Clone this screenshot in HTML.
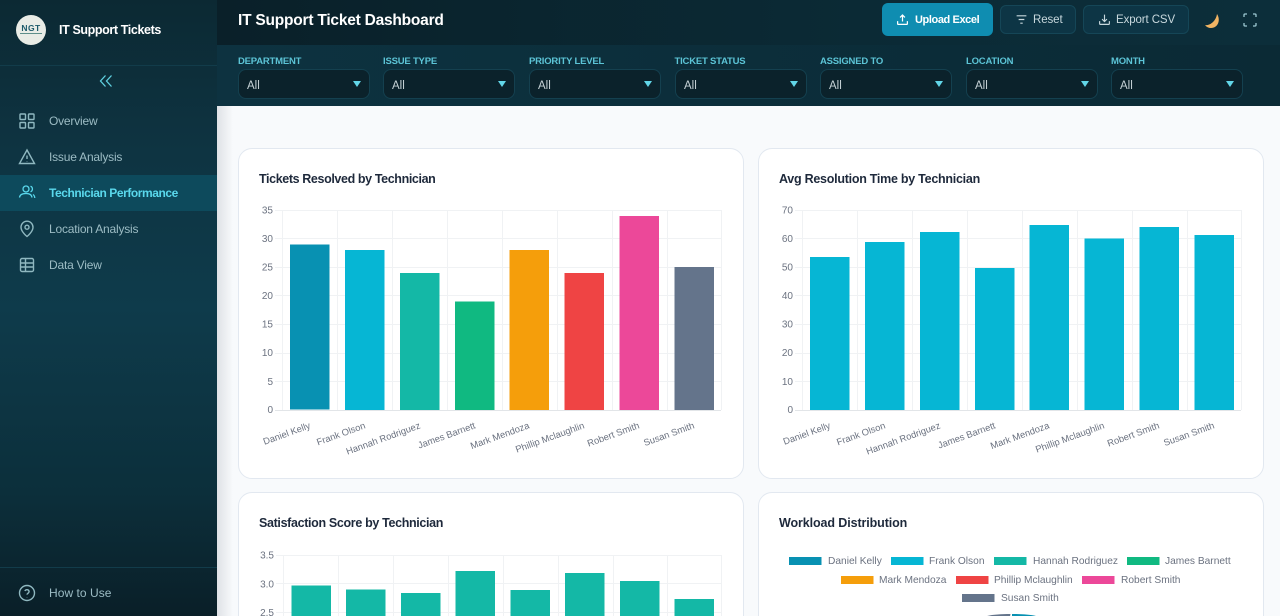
<!DOCTYPE html>
<html><head><meta charset="utf-8"><title>IT Support Ticket Dashboard</title>
<style>
*{box-sizing:border-box;margin:0;padding:0}
html,body{width:1280px;height:616px;overflow:hidden;background:#f8fafc;font-family:"Liberation Sans",sans-serif}
#root{position:relative;width:1280px;height:616px;overflow:hidden;background:#f8fafc}
.abs{position:absolute}
#side{left:0;top:0;width:217px;height:616px;background:linear-gradient(180deg,#0c2933 0%,#0e3442 25%,#0e3b4b 50%,#0c2f3b 80%,#0a1f28 100%)}
.nav{position:absolute;left:0;width:217px;height:36px;color:#9cbcc4;font-size:12px;line-height:36px;padding-left:49px;letter-spacing:-.2px}
.nav svg{position:absolute;left:18px;top:9px}
.nav.on{background:#0d4a5c;color:#5ad8ec;font-weight:bold;letter-spacing:-.44px}
#hdr{left:217px;top:0;width:1063px;height:45px;background:linear-gradient(90deg,#0a2029,#0b2a35 60%,#0c2e3a)}
#flt{left:217px;top:45px;width:1063px;height:61px;background:linear-gradient(90deg,#0d3240,#0b2c38 70%,#0b2a35)}
.btn{position:absolute;border:1px solid #154657;background:#0d3545;border-radius:6px;color:#c8d8dd;font-size:11.5px;height:29px;top:5px;line-height:28px}
.btn svg{position:absolute;top:7px}
.lab{position:absolute;top:11px;font-size:9.5px;font-weight:bold;color:#5cc4d6;letter-spacing:-.2px}
.sel{position:absolute;top:24px;width:132px;height:30px;background:#0b222b;border:1px solid #14404f;border-radius:8px;color:#c6d2d6;font-size:11.5px;line-height:32px;padding-left:8px}
.sel i{position:absolute;right:8px;top:11px;width:0;height:0;border-left:4px solid transparent;border-right:4px solid transparent;border-top:6px solid #62d6e8}
.card{position:absolute;background:#fff;border:1px solid #e2e8f0;border-radius:14px}
.tt{position:absolute;font-size:12.5px;font-weight:bold;color:#1e293b;left:20px;top:23px;letter-spacing:-.38px}
#shadow{left:217px;top:106px;width:16px;height:510px;background:linear-gradient(90deg,#dfe2e6,#f8fafc)}
</style></head><body>
<div id="root">
<div class="abs" id="side">
  <div class="abs" style="left:16px;top:15px;width:30px;height:30px;border-radius:50%;background:#e9ece6"></div>
  <div class="abs" style="left:16px;top:23px;width:30px;text-align:center;font-size:8.5px;font-weight:bold;color:#1c5a6a;letter-spacing:.4px">NGT</div>
  <div class="abs" style="left:20px;top:33px;width:22px;height:1px;background:#5f8f8a"></div>
  <div class="abs" style="left:59px;top:23px;font-size:12.5px;font-weight:bold;color:#fff;letter-spacing:-.38px">IT Support Tickets</div>
  <div class="abs" style="left:0;top:65px;width:217px;height:1px;background:#123c4a"></div>
  <svg class="abs" style="left:99px;top:74px" width="14" height="14" viewBox="0 0 14 14" fill="none" stroke="#5fd0e0" stroke-width="1.300"><path d="M6.500 1.500L1.500 7l5 5.500M12.500 1.500L7.500 7l5 5.500"/></svg>

  <div class="nav" style="top:103px"><svg width="18" height="18" viewBox="0 0 18 18" fill="none" stroke="#8fb8c0" stroke-width="1.400"><rect x="2" y="2" width="5.500" height="5.500" rx=".8"/><rect x="10.500" y="2" width="5.500" height="5.500" rx=".8"/><rect x="2" y="10.500" width="5.500" height="5.500" rx=".8"/><rect x="10.500" y="10.500" width="5.500" height="5.500" rx=".8"/></svg>Overview</div>
  <div class="nav" style="top:139px"><svg width="18" height="18" viewBox="0 0 18 18" fill="none" stroke="#8fb8c0" stroke-width="1.400"><path d="M9 2L1.500 15.500h15zM9 7.500v3.500M9 13v.4"/></svg>Issue Analysis</div>
  <div class="nav on" style="top:175px"><svg width="18" height="18" viewBox="0 0 18 18" fill="none" stroke="#5ad8ec" stroke-width="1.300"><circle cx="8" cy="5" r="3"/><path d="M1.500 13.500c.3-2.600 2.600-4 6.500-4s5.700 1.400 6 4M12.500 2.200a3 3 0 0 1 0 5.600M15 10.500c1 .6 1.700 1.800 1.800 3.500"/></svg>Technician Performance</div>
  <div class="nav" style="top:211px"><svg width="18" height="18" viewBox="0 0 18 18" fill="none" stroke="#8fb8c0" stroke-width="1.400"><path d="M9 16.500s-6-4.800-6-9.300a6 6 0 0 1 12 0c0 4.500-6 9.300-6 9.300z"/><circle cx="9" cy="7.200" r="2"/></svg>Location Analysis</div>
  <div class="nav" style="top:247px"><svg width="18" height="18" viewBox="0 0 18 18" fill="none" stroke="#8fb8c0" stroke-width="1.400"><rect x="2.500" y="2.500" width="13" height="13" rx="1.500"/><path d="M2.500 7h13M2.500 11h13M7.500 2.500v13"/></svg>Data View</div>
  <div class="abs" style="left:0;top:567px;width:217px;height:1px;background:#123c4a"></div>
  <div class="nav" style="top:575px;letter-spacing:.05px"><svg width="18" height="18" viewBox="0 0 18 18" fill="none" stroke="#8fb8c0" stroke-width="1.400"><circle cx="9" cy="9" r="7.500"/><path d="M6.900 7a2.200 2.200 0 0 1 4.200.6c0 1.400-2.100 1.900-2.100 3M9 13v.3"/></svg>How to Use</div>
</div>

<div class="abs" id="hdr">
  <div class="abs" style="left:21px;top:12px;font-size:15.5px;font-weight:bold;color:#fff;letter-spacing:-.22px">IT Support Ticket Dashboard</div>
  <div class="btn" style="left:665px;top:3px;width:111px;height:33px;background:#0f8db1;border:0;color:#fff;font-weight:bold;font-size:11px;line-height:35px;padding-left:33px;letter-spacing:-.4px"><svg style="left:14px;top:10px" width="13" height="13" viewBox="0 0 16 16" fill="none" stroke="#fff" stroke-width="1.500"><path d="M8 10.500V2.500M5 5.500l3-3 3 3M2 10v3a1 1 0 0 0 1 1h10a1 1 0 0 0 1-1v-3"/></svg>Upload Excel</div>
  <div class="btn" style="left:783px;width:76px;padding-left:32px;letter-spacing:-.1px"><svg style="left:14px" width="13" height="13" viewBox="0 0 16 16" fill="none" stroke="#c8d8dd" stroke-width="1.400"><path d="M2 3.500h12M4.500 8h7M6.500 12.500h3"/></svg>Reset</div>
  <div class="btn" style="left:866px;width:106px;padding-left:32px;letter-spacing:-.1px"><svg style="left:14px" width="13" height="13" viewBox="0 0 16 16" fill="none" stroke="#c8d8dd" stroke-width="1.400"><path d="M8 2v8.500M5 7.500l3 3 3-3M2 10v3a1 1 0 0 0 1 1h10a1 1 0 0 0 1-1v-3"/></svg>Export CSV</div>
  <svg class="abs" style="left:987px;top:12px" width="18" height="18" viewBox="0 0 18 18"><path d="M13 2C17 8 14 16 7 16 4.500 16 2.500 15 1 13 6 14 12 9 13 2z" fill="#f2b463"/></svg>
  <svg class="abs" style="left:1026px;top:13px" width="14" height="14" viewBox="0 0 14 14" fill="none" stroke="#9cc8d2" stroke-width="1.300"><path d="M1 4V2a1 1 0 0 1 1-1h2M10 1h2a1 1 0 0 1 1 1v2M13 10v2a1 1 0 0 1-1 1h-2M4 13H2a1 1 0 0 1-1-1v-2"/></svg>
</div>

<div class="abs" id="flt">
  <div class="lab" style="left:21px">DEPARTMENT</div><div class="sel" style="left:21px">All<i></i></div>
  <div class="lab" style="left:166px">ISSUE TYPE</div><div class="sel" style="left:166px">All<i></i></div>
  <div class="lab" style="left:312px">PRIORITY LEVEL</div><div class="sel" style="left:312px">All<i></i></div>
  <div class="lab" style="left:457.500px">TICKET STATUS</div><div class="sel" style="left:458px">All<i></i></div>
  <div class="lab" style="left:603px">ASSIGNED TO</div><div class="sel" style="left:603px">All<i></i></div>
  <div class="lab" style="left:749px">LOCATION</div><div class="sel" style="left:749px">All<i></i></div>
  <div class="lab" style="left:894px">MONTH</div><div class="sel" style="left:894px">All<i></i></div>
</div>
<div class="abs" id="shadow"></div>

<div class="card" style="left:238px;top:148px;width:506px;height:331px"><div class="tt">Tickets Resolved by Technician</div></div>
<div class="card" style="left:758px;top:148px;width:506px;height:331px"><div class="tt" style="letter-spacing:-.26px">Avg Resolution Time by Technician</div></div>
<div class="card" style="left:238px;top:492px;width:506px;height:140px"><div class="tt" style="letter-spacing:-.34px">Satisfaction Score by Technician</div></div>
<div class="card" style="left:758px;top:492px;width:506px;height:140px"><div class="tt" style="letter-spacing:-.1px">Workload Distribution</div></div>

<svg class="abs" style="left:0;top:0" width="1280" height="616" font-family="Liberation Sans, sans-serif">
<g stroke="#f0f2f4" stroke-width="1" fill="none">
<path d="M282.500 210v200M337.500 210v200M392.500 210v200M447.500 210v200M502.500 210v200M557.500 210v200M612.500 210v200M667.500 210v200M721.500 210v200"/>
<path d="M275 210.500h446M275 238.500h446M275 267.500h446M275 295.500h446M275 324.500h446M275 353.500h446M275 381.500h446"/>
<path d="M802.500 210v200M857.500 210v200M912.500 210v200M967.500 210v200M1022.500 210v200M1077.500 210v200M1132.500 210v200M1187.500 210v200M1241.500 210v200"/>
<path d="M795 210.500h446M795 238.500h446M795 267.500h446M795 295.500h446M795 324.500h446M795 353.500h446M795 381.500h446"/>
<path d="M283.500 555v61M338.500 555v61M393.500 555v61M448.500 555v61M503.500 555v61M558.500 555v61M613.500 555v61M667.500 555v61M721.500 555v61"/>
<path d="M276 555.500h445M276 583.500h445M276 612.500h445"/>
</g>
<path d="M275 410.500h446M795 410.500h446" stroke="#e2e5e8"/>
<g>
<rect x="290" y="244.500" width="39.500" height="165" fill="#0891b2"/>
<rect x="345" y="250" width="39.500" height="160" fill="#06b6d4"/>
<rect x="400" y="273" width="39.500" height="137" fill="#14b8a6"/>
<rect x="455" y="301.500" width="39.500" height="108.500" fill="#10b981"/>
<rect x="509.500" y="250" width="39.500" height="160" fill="#f59e0b"/>
<rect x="564.500" y="273" width="39.500" height="137" fill="#ef4444"/>
<rect x="619.500" y="216" width="39.500" height="194" fill="#ec4899"/>
<rect x="674.500" y="267" width="39.500" height="143" fill="#64748b"/>
</g>
<g fill="#06b6d4">
<rect x="810" y="257" width="39.500" height="153"/>
<rect x="865" y="242" width="39.500" height="168"/>
<rect x="920" y="232" width="39.500" height="178"/>
<rect x="975" y="268" width="39.500" height="142"/>
<rect x="1029.500" y="225" width="39.500" height="185"/>
<rect x="1084.500" y="238.500" width="39.500" height="171.500"/>
<rect x="1139.500" y="227" width="39.500" height="183"/>
<rect x="1194.500" y="235" width="39.500" height="175"/>
</g>
<g fill="#14b8a6">
<rect x="291.500" y="585.500" width="39.500" height="31"/>
<rect x="346" y="589.500" width="39.500" height="27"/>
<rect x="401" y="593" width="39.500" height="23"/>
<rect x="455.500" y="571" width="39.500" height="45"/>
<rect x="510.500" y="590" width="39.500" height="26"/>
<rect x="565" y="573" width="39.500" height="43"/>
<rect x="620" y="581" width="39.500" height="35"/>
<rect x="674.500" y="599" width="39.500" height="17"/>
</g>
<g font-size="10" fill="#6b7280" text-anchor="end">
<text x="273" y="213.500">35</text><text x="273" y="242">30</text><text x="273" y="299">20</text><text x="273" y="270.500">25</text><text x="273" y="327.500">15</text><text x="273" y="356">10</text><text x="273" y="385">5</text><text x="273" y="413">0</text>
<text x="793" y="213.500">70</text><text x="793" y="242">60</text><text x="793" y="270.500">50</text><text x="793" y="299">40</text><text x="793" y="327.500">30</text><text x="793" y="356">20</text><text x="793" y="385">10</text><text x="793" y="413">0</text>
<text x="274" y="558.500">3.5</text><text x="274" y="587.500">3.0</text><text x="274" y="616">2.5</text>
</g>
<g font-size="9.400" fill="#6b7280" text-anchor="end">
<text transform="translate(311,428) rotate(-20)">Daniel Kelly</text>
<text transform="translate(366,428) rotate(-20)">Frank Olson</text>
<text transform="translate(421,428) rotate(-20)">Hannah Rodriguez</text>
<text transform="translate(476,428) rotate(-20)">James Barnett</text>
<text transform="translate(530,428) rotate(-20)">Mark Mendoza</text>
<text transform="translate(585,428) rotate(-20)">Phillip Mclaughlin</text>
<text transform="translate(640,428) rotate(-20)">Robert Smith</text>
<text transform="translate(695,428) rotate(-20)">Susan Smith</text>
<text transform="translate(831,428) rotate(-20)">Daniel Kelly</text>
<text transform="translate(886,428) rotate(-20)">Frank Olson</text>
<text transform="translate(941,428) rotate(-20)">Hannah Rodriguez</text>
<text transform="translate(996,428) rotate(-20)">James Barnett</text>
<text transform="translate(1050,428) rotate(-20)">Mark Mendoza</text>
<text transform="translate(1105,428) rotate(-20)">Phillip Mclaughlin</text>
<text transform="translate(1160,428) rotate(-20)">Robert Smith</text>
<text transform="translate(1215,428) rotate(-20)">Susan Smith</text>
</g>
<g>
<rect x="789" y="557" width="32.500" height="8" fill="#0891b2"/><rect x="891" y="557" width="32.500" height="8" fill="#06b6d4"/><rect x="994" y="557" width="32.500" height="8" fill="#14b8a6"/><rect x="1127" y="557" width="32.500" height="8" fill="#10b981"/>
<rect x="841" y="576" width="32.500" height="8" fill="#f59e0b"/><rect x="956" y="576" width="32.500" height="8" fill="#ef4444"/><rect x="1082" y="576" width="32.500" height="8" fill="#ec4899"/>
<rect x="962" y="594" width="32.500" height="8" fill="#64748b"/>
</g>
<g font-size="10.200" fill="#6b7280">
<text x="828" y="564">Daniel Kelly</text><text x="929" y="564">Frank Olson</text><text x="1033" y="564">Hannah Rodriguez</text><text x="1165" y="564">James Barnett</text>
<text x="879" y="583">Mark Mendoza</text><text x="994" y="583">Phillip Mclaughlin</text><text x="1121" y="583">Robert Smith</text>
<text x="1001" y="601">Susan Smith</text>
</g>
<path d="M1010.500 614l-.4 2h-23c6-1.500 14-2 23.400-2z" fill="#64748b"/>
<path d="M1012 614c9.500 0 18 .6 24 2h-24z" fill="#0891b2"/>
</svg>
</div>
</body></html>
